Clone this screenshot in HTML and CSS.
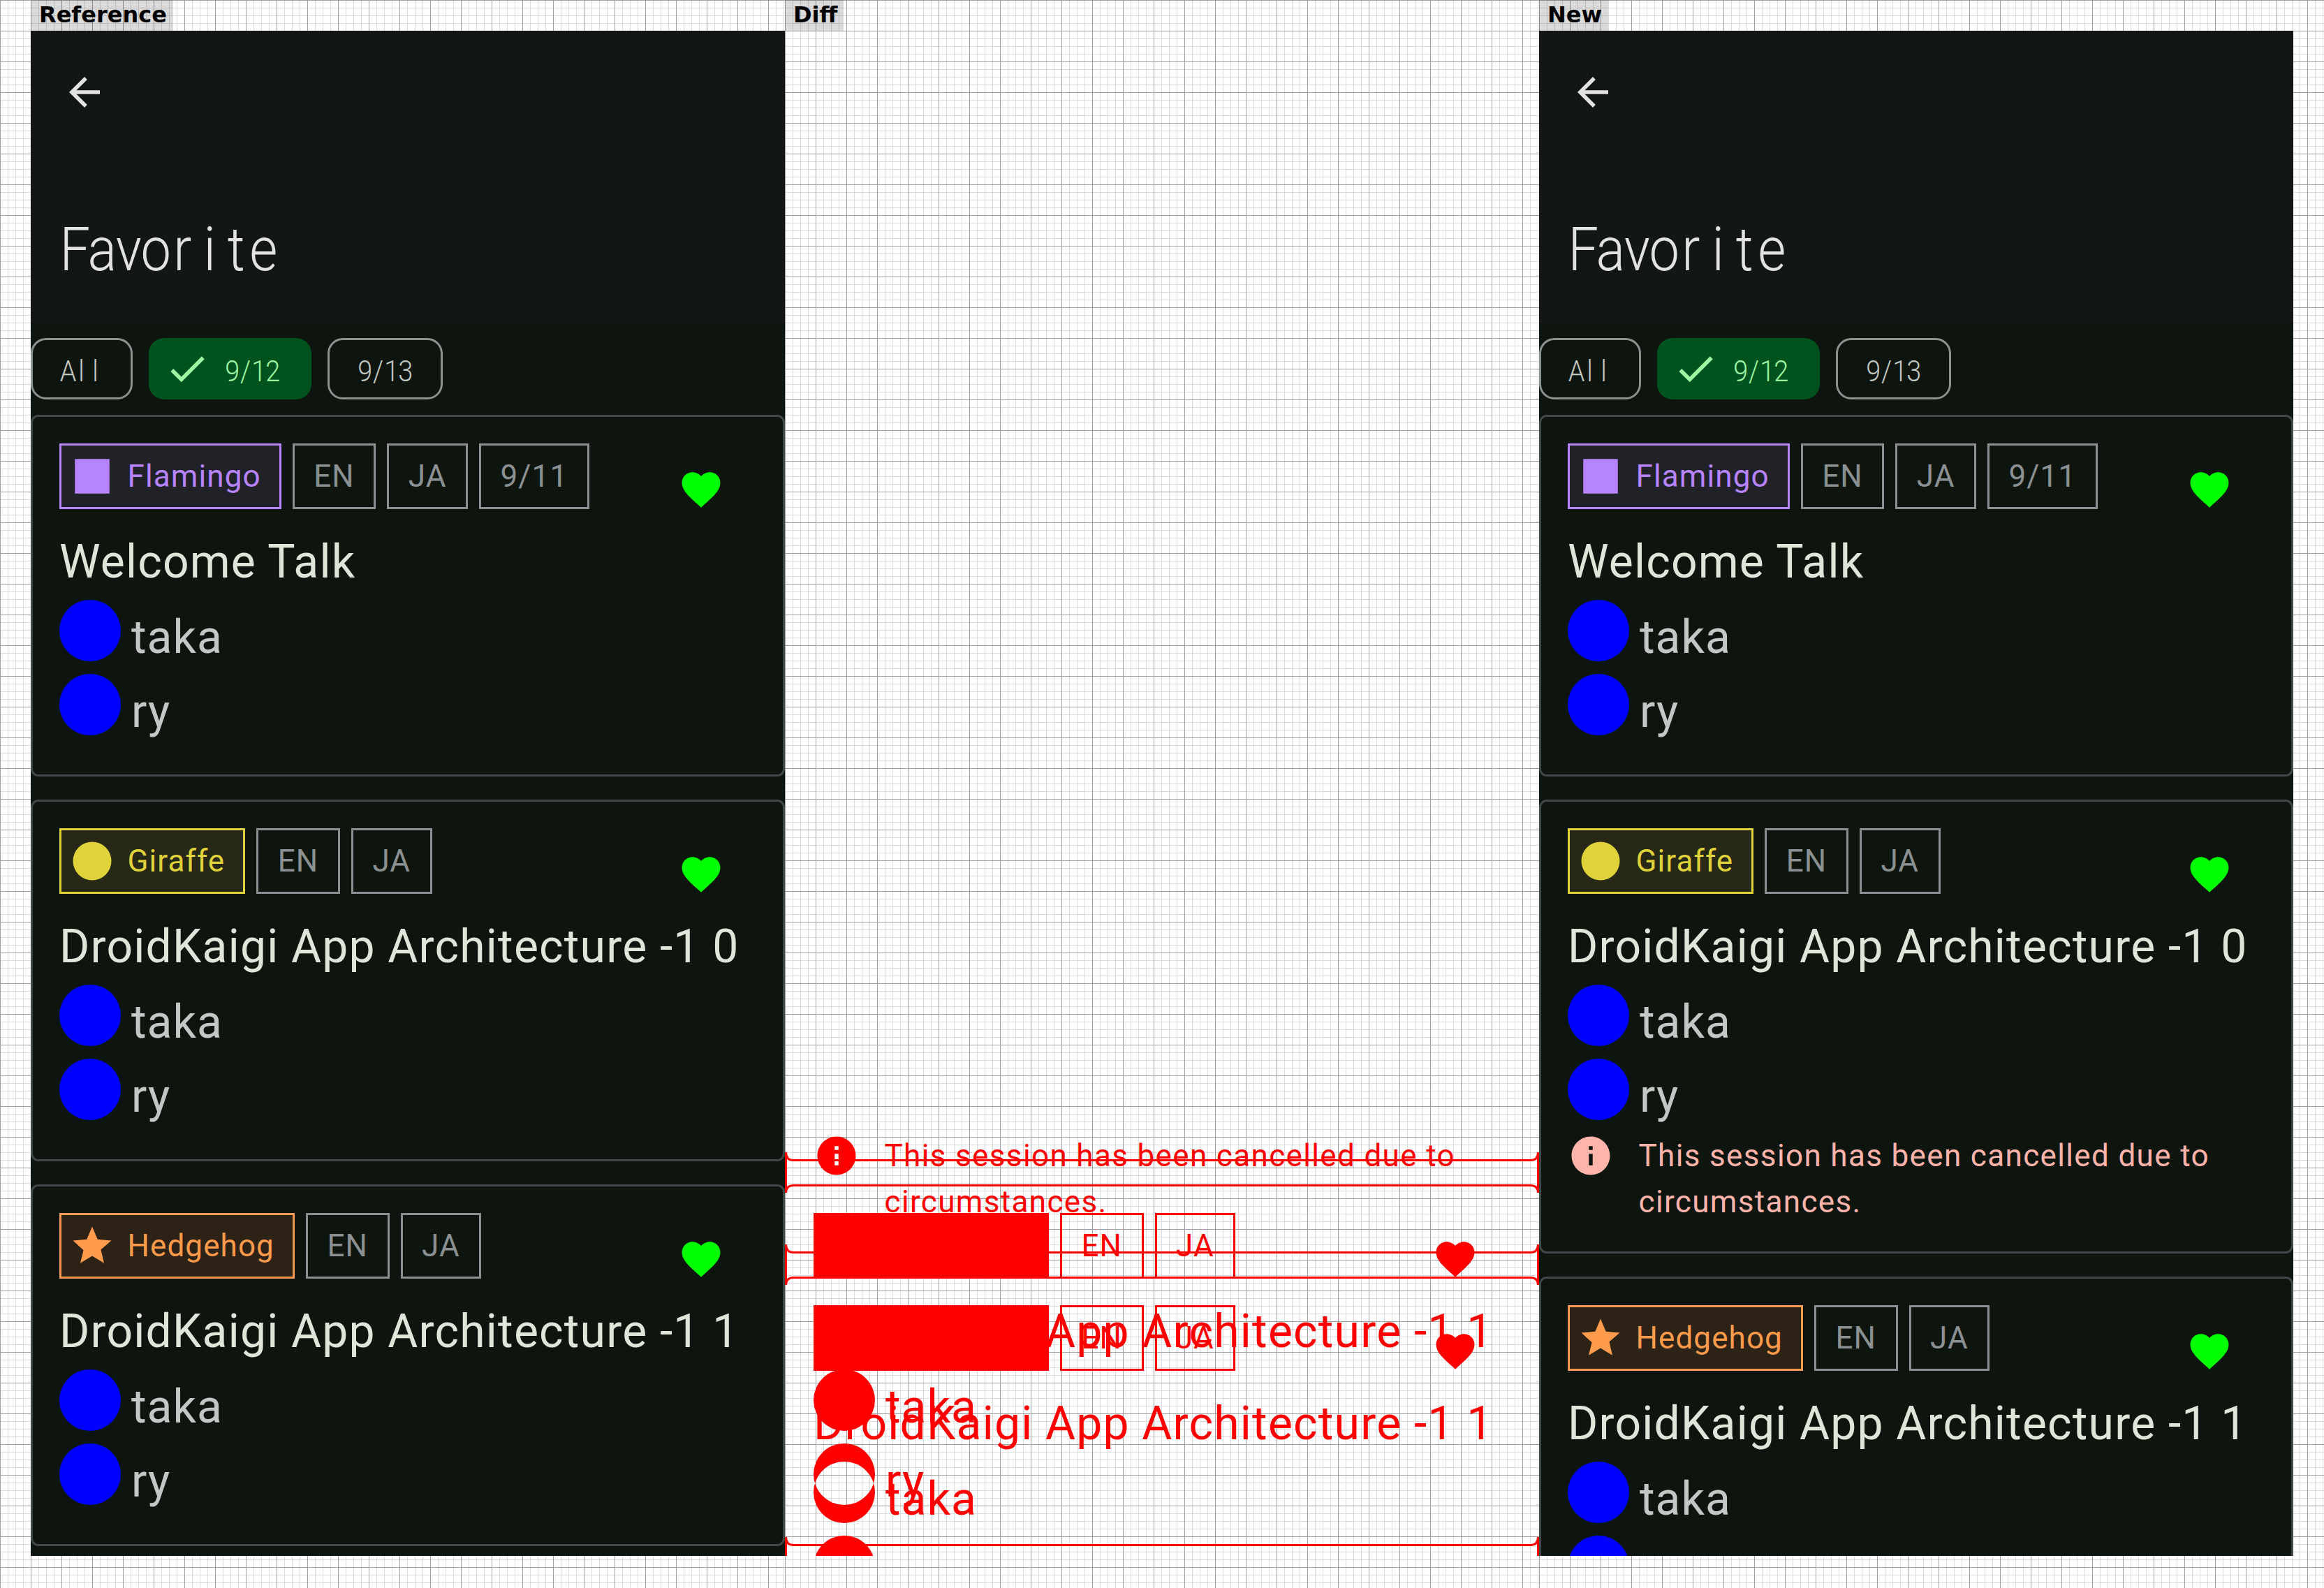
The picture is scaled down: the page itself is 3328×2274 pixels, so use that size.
FILE: index.html
```html
<!DOCTYPE html>
<html lang="en">
<head>
<meta charset="utf-8">
<title>Favorite comparison</title>
<link rel="stylesheet" href="styles.css">
</head>
<body>
<svg class="defs" width="0" height="0" aria-hidden="true">
  <symbol id="i-back" viewBox="0 0 24 24"><path d="M20 11H7.83l5.59-5.59L12 4l-8 8 8 8 1.41-1.41L7.83 13H20v-2z"/></symbol>
  <symbol id="i-check" viewBox="0 0 24 24"><path d="M9 16.17L4.83 12l-1.41 1.41L9 19 21 7l-1.41-1.41z"/></symbol>
  <symbol id="i-square" viewBox="0 0 24 24"><path d="M3 3h18v18H3z"/></symbol>
  <symbol id="i-circle" viewBox="0 0 24 24"><circle cx="12" cy="12" r="10"/></symbol>
  <symbol id="i-star" viewBox="0 0 24 24"><path d="M12 17.27L18.18 21l-1.64-6.97L22 9.24l-7.19-.61L12 2 9.19 8.63 2 9.24l5.46 5.07L5.82 21z"/></symbol>
  <symbol id="i-heart" viewBox="0 0 24 24"><path d="M12 21.35l-1.45-1.32C5.4 15.36 2 12.28 2 8.5 2 5.42 4.42 3 7.5 3c1.74 0 3.41.81 4.5 2.09C13.09 3.81 14.76 3 16.5 3 19.58 3 22 5.42 22 8.5c0 3.78-3.4 6.86-8.55 11.54L12 21.35z"/></symbol>
  <symbol id="i-info" viewBox="0 0 24 24"><path d="M12 2C6.48 2 2 6.48 2 12s4.48 10 10 10 10-4.48 10-10S17.52 2 12 2zm1 15h-2v-6h2v6zm0-8h-2V7h2v2z"/></symbol>
</svg>
<main class="board">

  <section class="panel panel-ref">
    <div class="label">Reference</div>
    <div class="phone">
      <header class="appbar">
        <svg class="back"><use href="#i-back"/></svg>
        <h1 class="title"><span class="m">F</span><span class="m">a</span><span class="m">v</span><span class="m">o</span><span class="m">r</span><span class="m">i</span><span class="m">t</span><span class="m">e</span></h1>
      </header>
      <div class="chips">
        <div class="chip"><span class="m">A</span><span class="m">l</span><span class="m">l</span></div>
        <div class="chip chip-on"><svg class="chip-check"><use href="#i-check"/></svg><span class="m">9</span><span class="m">/</span><span class="m">1</span><span class="m">2</span></div>
        <div class="chip"><span class="m">9</span><span class="m">/</span><span class="m">1</span><span class="m">3</span></div>
      </div>
      <div class="cards">
        <article class="card">
          <div class="tags">
            <div class="tag tag-flamingo"><svg class="tag-icon"><use href="#i-square"/></svg><span>Flamingo</span></div>
            <div class="tag tag-plain">EN</div>
            <div class="tag tag-plain">JA</div>
            <div class="tag tag-plain">9/11</div>
            <svg class="heart"><use href="#i-heart"/></svg>
          </div>
          <h2 class="session">Welcome Talk</h2>
          <div class="speaker"><span class="avatar"></span><span class="name">taka</span></div>
          <div class="speaker"><span class="avatar"></span><span class="name">ry</span></div>
        </article>
        <article class="card">
          <div class="tags">
            <div class="tag tag-giraffe"><svg class="tag-icon"><use href="#i-circle"/></svg><span>Giraffe</span></div>
            <div class="tag tag-plain">EN</div>
            <div class="tag tag-plain">JA</div>
            <svg class="heart"><use href="#i-heart"/></svg>
          </div>
          <h2 class="session">DroidKaigi App Architecture -1 0</h2>
          <div class="speaker"><span class="avatar"></span><span class="name">taka</span></div>
          <div class="speaker"><span class="avatar"></span><span class="name">ry</span></div>
        </article>
        <article class="card">
          <div class="tags">
            <div class="tag tag-hedgehog"><svg class="tag-icon"><use href="#i-star"/></svg><span>Hedgehog</span></div>
            <div class="tag tag-plain">EN</div>
            <div class="tag tag-plain">JA</div>
            <svg class="heart"><use href="#i-heart"/></svg>
          </div>
          <h2 class="session">DroidKaigi App Architecture -1 1</h2>
          <div class="speaker"><span class="avatar"></span><span class="name">taka</span></div>
          <div class="speaker"><span class="avatar"></span><span class="name">ry</span></div>
        </article>
      </div>
    </div>
  </section>

  <section class="panel panel-diff">
    <div class="label">Diff</div>
    <div class="stage">
      <div class="layer layer-info">
        <div class="info"><svg class="info-icon"><use href="#i-info"/></svg><p class="info-text">This session has been cancelled due to circumstances.</p></div>
      </div>
      <article class="card layer layer-old">
        <div class="tags">
          <div class="tag tag-solid"></div>
          <div class="tag tag-plain">EN</div>
          <div class="tag tag-plain">JA</div>
          <svg class="heart"><use href="#i-heart"/></svg>
        </div>
        <h2 class="session">DroidKaigi App Architecture -1 1</h2>
        <div class="speaker"><span class="avatar avatar-none"></span><span class="name">taka</span></div>
        <div class="speaker"><span class="avatar avatar-none"></span><span class="name">ry</span></div>
      </article>
      <article class="card layer layer-new">
        <div class="tags">
          <div class="tag tag-solid"></div>
          <div class="tag tag-plain">EN</div>
          <div class="tag tag-plain">JA</div>
          <svg class="heart"><use href="#i-heart"/></svg>
        </div>
        <h2 class="session">DroidKaigi App Architecture -1 1</h2>
        <div class="speaker"><span class="avatar avatar-none"></span><span class="name">taka</span></div>
        <div class="speaker"><span class="avatar avatar-none"></span><span class="name">ry</span></div>
      </article>
      <svg class="edges" viewBox="0 0 1080 2184">
        <path class="edge" d="M1.5 1606V1664M1078.5 1606V1664M1.5 1606Q1.5 1617.5 12.5 1617.5H1067.5Q1078.5 1617.5 1078.5 1606M1.5 1664Q1.5 1653.5 12.5 1653.5H1067.5Q1078.5 1653.5 1078.5 1664"/>
        <path class="edge" d="M1.5 1738V1796M1078.5 1738V1796M1.5 1738Q1.5 1749.5 12.5 1749.5H1067.5Q1078.5 1749.5 1078.5 1738M1.5 1796Q1.5 1785.5 12.5 1785.5H1067.5Q1078.5 1785.5 1078.5 1796"/>
        <path class="edge" d="M1.5 2157V2184M1078.5 2157V2184M1.5 2157Q1.5 2168.5 12.5 2168.5H1067.5Q1078.5 2168.5 1078.5 2157"/>
        <path class="blob" fill-rule="evenodd" d="M41 1961a44 44 0 1 0 88 0a44 44 0 1 0-88 0zM41 2067a44 44 0 1 0 88 0a44 44 0 1 0-88 0zM41 2093a44 44 0 1 0 88 0a44 44 0 1 0-88 0zM41 2199a44 44 0 1 0 88 0a44 44 0 1 0-88 0z"/>
      </svg>
    </div>
  </section>

  <section class="panel panel-new">
    <div class="label">New</div>
    <div class="phone">
      <header class="appbar">
        <svg class="back"><use href="#i-back"/></svg>
        <h1 class="title"><span class="m">F</span><span class="m">a</span><span class="m">v</span><span class="m">o</span><span class="m">r</span><span class="m">i</span><span class="m">t</span><span class="m">e</span></h1>
      </header>
      <div class="chips">
        <div class="chip"><span class="m">A</span><span class="m">l</span><span class="m">l</span></div>
        <div class="chip chip-on"><svg class="chip-check"><use href="#i-check"/></svg><span class="m">9</span><span class="m">/</span><span class="m">1</span><span class="m">2</span></div>
        <div class="chip"><span class="m">9</span><span class="m">/</span><span class="m">1</span><span class="m">3</span></div>
      </div>
      <div class="cards">
        <article class="card">
          <div class="tags">
            <div class="tag tag-flamingo"><svg class="tag-icon"><use href="#i-square"/></svg><span>Flamingo</span></div>
            <div class="tag tag-plain">EN</div>
            <div class="tag tag-plain">JA</div>
            <div class="tag tag-plain">9/11</div>
            <svg class="heart"><use href="#i-heart"/></svg>
          </div>
          <h2 class="session">Welcome Talk</h2>
          <div class="speaker"><span class="avatar"></span><span class="name">taka</span></div>
          <div class="speaker"><span class="avatar"></span><span class="name">ry</span></div>
        </article>
        <article class="card">
          <div class="tags">
            <div class="tag tag-giraffe"><svg class="tag-icon"><use href="#i-circle"/></svg><span>Giraffe</span></div>
            <div class="tag tag-plain">EN</div>
            <div class="tag tag-plain">JA</div>
            <svg class="heart"><use href="#i-heart"/></svg>
          </div>
          <h2 class="session">DroidKaigi App Architecture -1 0</h2>
          <div class="speaker"><span class="avatar"></span><span class="name">taka</span></div>
          <div class="speaker"><span class="avatar"></span><span class="name">ry</span></div>
          <div class="info"><svg class="info-icon"><use href="#i-info"/></svg><p class="info-text">This session has been cancelled due to circumstances.</p></div>
        </article>
        <article class="card">
          <div class="tags">
            <div class="tag tag-hedgehog"><svg class="tag-icon"><use href="#i-star"/></svg><span>Hedgehog</span></div>
            <div class="tag tag-plain">EN</div>
            <div class="tag tag-plain">JA</div>
            <svg class="heart"><use href="#i-heart"/></svg>
          </div>
          <h2 class="session">DroidKaigi App Architecture -1 1</h2>
          <div class="speaker"><span class="avatar"></span><span class="name">taka</span></div>
          <div class="speaker"><span class="avatar"></span><span class="name">ry</span></div>
        </article>
      </div>
    </div>
  </section>

</main>
</body>
</html>
```

FILE: styles.css
```css
* { box-sizing: border-box; }
html, body { margin: 0; padding: 0; }
body { font-family: Roboto, "Liberation Sans", sans-serif; background: #fff; }
.defs { position: absolute; }

.board { display: flex; width: 3328px; height: 2274px; overflow: hidden; }

.panel {
  display: flex;
  flex-direction: column;
  align-items: flex-start;
  background-color: #fff;
  background-image:
    linear-gradient(#a0a0a0 1px, transparent 1px),
    linear-gradient(90deg, #a0a0a0 1px, transparent 1px),
    linear-gradient(#dcdcdc 1px, transparent 1px),
    linear-gradient(90deg, #dcdcdc 1px, transparent 1px);
  background-size: 44px 44px, 44px 44px, 11px 11px, 11px 11px;
}
.panel-ref { width: 1124px; padding-left: 44px; }
.panel-diff { width: 1080px; }
.panel-new { width: 1124px; padding-right: 44px; }

.label {
  height: 44px;
  padding: 0 9px 0 12px;
  background: rgba(0, 0, 0, .14);
  color: #000;
  font: bold 32px/42px "DejaVu Sans", sans-serif;
}

.phone {
  width: 1080px;
  height: 2184px;
  overflow: hidden;
  background: #0e150e;
}

.appbar {
  height: 419px;
  padding: 55px 0 0 44px;
  background: #121615;
}
.back { display: block; width: 66px; height: 66px; fill: #e2e3e0; }
.title {
  display: flex;
  margin: 142px 0 0;
  color: #e2e3e0;
  font-size: 88px;
  font-weight: 300;
  line-height: 100px;
}
.m { display: inline-flex; justify-content: center; width: 38.5px; transform: scaleX(.88); }

.chips { display: flex; gap: 23px; padding: 21px 0 22px; }
.chip {
  display: flex;
  align-items: center;
  height: 88px;
  padding: 5px 41px 0;
  border: 3px solid #8b9290;
  border-radius: 22px;
  color: #c2c8c2;
  font-size: 43px;
  font-weight: 300;
}
.chip .m { width: 19.25px; }
.chip-on {
  padding: 5px 46px 0 22px;
  border: 0;
  background: #00531f;
  color: #9ff6a5;
}
.chip-check { width: 66px; height: 66px; margin: -5px 22px 0 0; fill: #9ff6a5; }

.cards { display: flex; flex-direction: column; gap: 33px; }
.card {
  width: 1080px;
  padding: 38px;
  border: 3px solid #41484a;
  border-radius: 11px;
  background: #0e150e;
}

.tags { display: flex; gap: 16px; height: 94px; }
.tag {
  display: flex;
  align-items: center;
  height: 94px;
  padding: 0 27.5px;
  border: 3px solid currentColor;
  font-size: 44px;
  letter-spacing: 1.1px;
}
.tag-plain { color: #8b9192; }
.tag-flamingo, .tag-giraffe, .tag-hedgehog { padding: 0 26px 0 10.5px; }
.tag-flamingo { color: #b784ff; background: #212128; }
.tag-giraffe { color: #dfd23a; background: #282816; }
.tag-hedgehog { color: #ff9b4c; background: #2d2216; }
.tag-icon { width: 66px; height: 66px; margin-right: 18px; fill: currentColor; }
.heart { width: 66px; height: 66px; margin: 33px 46px 0 auto; fill: #0f0; }

.session {
  margin: 37px 0 16px;
  color: #e0e4d9;
  font-size: 66px;
  font-weight: 400;
  line-height: 77px;
  letter-spacing: 1.2px;
  white-space: nowrap;
}

.speaker { display: flex; height: 88px; margin-bottom: 18px; }
.avatar { width: 88px; height: 88px; border-radius: 50%; background: #00f; }
.avatar-none { background: none; }
.name {
  margin-left: 15px;
  padding-top: 10px;
  color: #c2c8c6;
  font-size: 66px;
  line-height: 88px;
  letter-spacing: 1px;
}

.info { display: flex; gap: 35.5px; color: #ffb4ab; }
.info-icon { flex: none; width: 66px; height: 66px; fill: currentColor; }
.info-text {
  width: 840px;
  margin: 0;
  font-size: 44px;
  line-height: 66px;
  letter-spacing: 1.35px;
}

.stage { position: relative; width: 1080px; height: 2184px; overflow: hidden; }
.layer { position: absolute; left: 0; }
.layer-info { top: 1578px; padding-left: 41px; width: 1080px; }
.layer-old { top: 1652px; }
.layer-new { top: 1784px; }
.stage .card { border-color: transparent; background: none; }
.stage .info, .stage .tag-plain, .stage .session, .stage .name { color: #f00; }
.stage .heart { fill: #f00; }
.tag-solid { width: 337px; background: #f00; color: #f00; }
.edges { position: absolute; left: 0; top: 0; width: 1080px; height: 2184px; overflow: hidden; }
.edge { fill: none; stroke: #f00; stroke-width: 3; }
.blob { fill: #f00; }
```
